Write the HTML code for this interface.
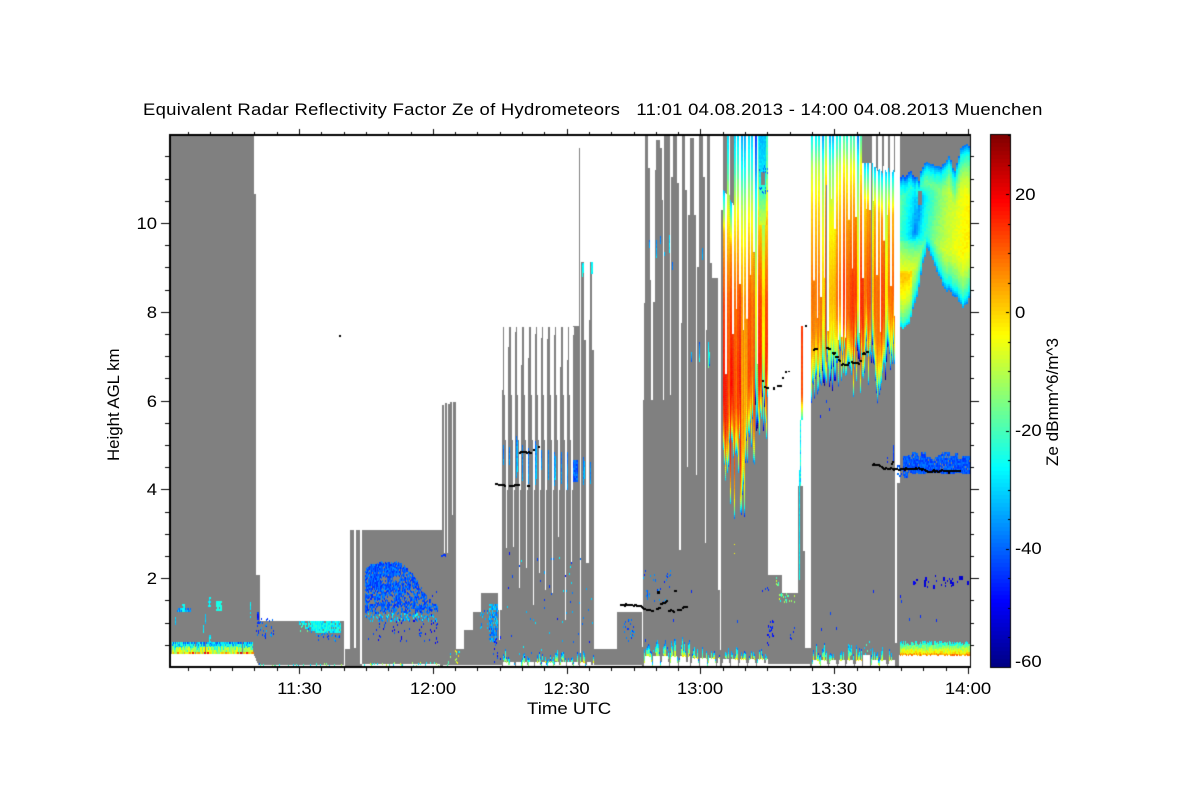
<!DOCTYPE html>
<html lang="en">
<head>
<meta charset="utf-8">
<title>Equivalent Radar Reflectivity Factor</title>
<style>
html,body{margin:0;padding:0;background:#fff;width:1200px;height:800px;overflow:hidden}
#wrap{position:relative;width:1200px;height:800px;background:#fff}
canvas,svg{position:absolute;left:0;top:0}
text{font-family:"Liberation Sans",Arial,sans-serif;fill:#000;font-size:16.5px}
</style>
</head>
<body>
<div id="wrap">
<canvas id="c" width="1200" height="800"></canvas>
<svg width="1200" height="800" viewBox="0 0 1200 800" xmlns="http://www.w3.org/2000/svg">
<text transform="translate(143,115) scale(1.12,1)" textLength="803" lengthAdjust="spacing" xml:space="preserve">Equivalent Radar Reflectivity Factor Ze of Hydrometeors   11:01 04.08.2013 - 14:00 04.08.2013 Muenchen</text>
<g text-anchor="end">
<text transform="translate(157,229) scale(1.12,1)">10</text>
<text transform="translate(157,318) scale(1.12,1)">8</text>
<text transform="translate(157,407) scale(1.12,1)">6</text>
<text transform="translate(157,495) scale(1.12,1)">4</text>
<text transform="translate(157,584) scale(1.12,1)">2</text>
</g>
<g text-anchor="middle">
<text transform="translate(299.5,694) scale(1.12,1)">11:30</text>
<text transform="translate(433,694) scale(1.12,1)">12:00</text>
<text transform="translate(566.5,694) scale(1.12,1)">12:30</text>
<text transform="translate(700,694) scale(1.12,1)">13:00</text>
<text transform="translate(834,694) scale(1.12,1)">13:30</text>
<text transform="translate(968,694) scale(1.12,1)">14:00</text>
</g>
<text transform="translate(527,714) scale(1.13,1)">Time UTC</text>
<text transform="translate(119,461) rotate(-90) scale(1.02,1)">Height AGL km</text>
<text transform="translate(1058,466) rotate(-90) scale(1.035,1)">Ze dBmm^6/m^3</text>
<g>
<text transform="translate(1015,200) scale(1.12,1)">20</text>
<text transform="translate(1015,318) scale(1.12,1)">0</text>
<text transform="translate(1015,436) scale(1.12,1)">-20</text>
<text transform="translate(1015,554) scale(1.12,1)">-40</text>
<text transform="translate(1015,667) scale(1.12,1)">-60</text>
</g>
</svg>
</div>
<script>
(function(){
var cv=document.getElementById('c'),c=cv.getContext('2d');
var s=20130804;
function R(){s|=0;s=s+0x6D2B79F5|0;var t=Math.imul(s^s>>>15,1|s);t=t+Math.imul(t^t>>>7,61|t)^t;return((t^t>>>14)>>>0)/4294967296;}
function cl(v){return v<0?0:v>1?1:v}
function jet(t){t=cl(t);var r=cl(1.5-Math.abs(4*t-3)),g=cl(1.5-Math.abs(4*t-2)),b=cl(1.5-Math.abs(4*t-1));
 return 'rgb('+Math.round(r*255)+','+Math.round(g*255)+','+Math.round(b*255)+')';}
function rect(col,a,b,t,bt){c.fillStyle=col;c.fillRect(Math.round(a),Math.round(t),Math.round(b)-Math.round(a),Math.round(bt)-Math.round(t));}
function G(a,b,t,bt){rect('#808080',a,b,t,bt===undefined?667:bt);}
function W(a,b,t,bt){rect('#ffffff',a,b,t,bt);}
function lerp(tb,x){if(x<=tb[0][0])return tb[0][1];for(var i=1;i<tb.length;i++){if(x<=tb[i][0]){var p=tb[i-1],q=tb[i];return p[1]+(q[1]-p[1])*(x-p[0])/(q[0]-p[0]);}}return tb[tb.length-1][1];}
function cell(x,y,w,h,t){c.fillStyle=jet(t);c.fillRect(x,y,w,h);}
function speck(a,b,t,bt,n,t0,t1,w,h){for(var i=0;i<n;i++){var x=Math.round(a+R()*(b-a)),y=Math.round(t+R()*(bt-t));cell(x,y,w||1,h||2,t0+R()*(t1-t0));}}
function vs(x,y0,y1,t0,t1,w){for(var y=y0;y<y1;y+=2){cell(x,y,w||1,2,t0+(t1-t0)*(y-y0)/Math.max(1,y1-y0)+(R()-.5)*.05);}}

/* ---- gray structure ---- */
G(170,254,135);G(170,256,194);G(256,260,575);G(260,344,621);
G(345,350,649);G(350,354,530);G(354,356,648);G(356,360,530);G(360,362,664);G(362,443,530);
[[442,444,405],[445,447,403],[448,450,404],[450,452,402],[453,456,402]].forEach(function(a){G(a[0],a[1],a[2]);});
W(444,445,403,528);W(447,448,404,500);W(452,453,402,470);
G(440,443,530);G(444,448,553);G(445,447,403);G(448,452,490);G(452,456,515);
G(456,464,649);G(464,473,630);G(473,481,612);G(481,498,593);G(498,502,640);G(498,499,610);G(500,502,610);
/* comb 1 */
G(502,574,327);G(573,580,326);G(579,580,148);G(581,584,262);G(584,586,340);G(586,589,563);G(589,590,320);G(590,592,262);G(592,594,350);
[[506,548],[512.7,547],[519,588],[526,568],[532.7,605],[539,573],[545,590],[552,593],[558,537],[565,620],[571,563]].forEach(function(g){
 var x=Math.round(g[0]),st=327+R()*40;
 W(x-2,x+2,327,395);W(x-1,x+2,395,440);W(x,x+2,440,Math.min(g[1],490));W(x,x+1,490,g[1]);
 W(x+2,x+3,327,st);
});
W(502,503,327,390);W(580,581,262,442);
G(594,617,649);G(617,642,612);G(642,643,647);
/* comb 2 */
G(643,718,400);
[[644,645,303],[645,648,135],[648,650,168],[650,651,280],[653,655,302],[655,656,170],[656,660,140],[660,662,148],[662,663,200],
 [664,670,136],[670,671,395],[671,673,177],[673,677,135],[677,679,183],[681,682,323],[682,685,136],[685,687,190],[688,690,215],[690,694,138],[694,696,215],
 [697,699,267],[699,703,136],[703,705,177],[706,707,330],[707,710,136],[710,712,263],[712,718,278]].forEach(function(a){G(a[0],a[1],a[2]);});
W(679,681,400,550);W(687,688,400,467);W(696,697,400,475);W(705,706,400,543);
G(718,722,590);W(720,721,590,650);
/* section 1 base */
G(721,768,135);W(718,723,135,210);
G(768,782,575);G(782,798,593);G(798,803,486);G(803,805,551);G(805,811,648);
G(811,895,135);G(895,900,643);G(897,900,483);G(900,970,135);

/* ---- striped colour sections ---- */
var dTb=[[0,.22],[4,.33],[9,.47],[16,.6],[28,.7],[50,.78],[200,.8]];
function sec(x0,x1,per,topTb,endf,gbf,startf,graytop,noGapFrom){
 var gb={},toff={},gw={};
 for(var x=x0;x<x1;x++){
  var i=Math.floor((x-x0)/per),ph=(x-x0)-i*per;
  if(gb[i]===undefined){gb[i]=gbf(i);toff[i]=(R()-.5)*.08-(R()<.2?.12:0);gw[i]=i%2?1.2:1.6;}
  var st=startf(x),en=endf(x),off=toff[i]+(R()-.5)*.035,st0=st;
  var isGap=ph>per-gw[i]&&(!noGapFrom||x<noGapFrom);
  if(st>135&&graytop)graytop(x,st);
  if(isGap){W(x,x+1,st,gb[i]);st=Math.max(st,gb[i]);}
  for(var y=st;y<en;y+=2){
   var t=Math.min(lerp(topTb,y),lerp(dTb,en-y))+off*(1+cl((y-300)/80)*.9)+(R()-.5)*.018;
   if(st0>135)t=Math.min(t,.32+(y-st0)*.009);
   cell(x,y,1,2,t);
  }
 }
}
var top1=[[135,.33],[150,.37],[170,.43],[190,.52],[210,.6],[235,.66],[265,.72],[300,.77],[400,.79]];
sec(723,768,3.5,top1,function(x){
 var b=x<745?480:(x<755?440:415);
 return b+(R()-.5)*(x<745?85:48);
},function(i){return 165+R()*210;},function(x){return (x<734&&Math.floor((x-723)/3.5)%2==0)?190+Math.floor((x-723)*1.5):135;},null,759);
/* right part of section 1: cool top with gray patch */
for(var x=759;x<768;x++){for(var y=135;y<225;y+=2){
 var t=lerp([[135,.31],[175,.36],[195,.46],[225,.58]],y)+(x>765?.12:0)+(R()-.5)*.04;
 cell(x,y,1,2,t);
}}
G(761,765,172,185);
speck(759,767,165,172,10,.2,.28);speck(759,767,185,192,12,.18,.28);
/* section 2 */
var top2=[[135,.4],[150,.48],[165,.58],[185,.64],[210,.7],[240,.74],[280,.78],[340,.8]];
var endT=[[811,395],[820,380],[840,365],[860,360],[866,353],[872,350],[874,380],[885,380],[887,360],[895,354]];
sec(811,895,3.5,top2,function(x){
 var b=lerp(endT,x),sp=x>872&&x<886?52:42;
 return b+(R()-.5)*sp+(R()<.08?18:0);
},function(i){return 190+R()*160;},function(x){return x>=862?(x>872?165+Math.round(R()*8):163):135;},function(x,st){
 if(x>=872){if(x%6>=2)W(x,x+1,135,st);}
});
G(826,827,185,362);G(871,872,135,352);
W(895,900,135,390);W(895,899,390,483);W(895,897,483,643);
/* orange stripe */
for(var y=326;y<420;y+=2){var t=lerp([[326,.82],[395,.8],[405,.65],[413,.5],[420,.38]],y);cell(801,y,2,2,t+(R()-.5)*.02);}
for(var y=420;y<486;y+=2){cell(800,y,1,2,.3+R()*.15);}

/* ---- big blob ---- */
var tB=[[900,177],[910,172],[918,180],[920,172],[925,160],[933,165],[940,167],[948,156],[953,172],[960,148],[963,144],[968,147],[970,150]];
var bB=[[900,325],[901,330],[908,323],[917,293],[922,263],[925,250],[927,248],[930,255],[935,267],[943,287],[947,290],[953,293],[962,307],[967,303],[970,290]];
var dB=[[0,.25],[3,.31],[7,.375],[13,.43],[22,.5],[33,.56],[48,.61],[62,.65]];
function seg(px,py,ax,ay,bx,by){var dx=bx-ax,dy=by-ay,u=cl(((px-ax)*dx+(py-ay)*dy)/(dx*dx+dy*dy));var qx=ax+u*dx-px,qy=ay+u*dy-py;return Math.sqrt(qx*qx+qy*qy);}
for(var x=900;x<970;x+=2){
 var tp=lerp(tB,x)+Math.round(R()*4-2),bt=lerp(bB,x)+Math.round(R()*4-2);
 for(var y=Math.round(tp);y<bt;y+=2){
  if(x>=917&&x<922&&y>=190&&y<205)continue;
  var d=Math.min(y-tp,bt-y);
  var ds=seg(x,y,919.5,197,915,232);
  d=Math.min(d,ds*1.1+1);
  var t=lerp(dB,d);
  if(x<915&&y<240)t-=.04;
  if(x<912&&y>270)t+=.06;
  cell(x,y,2,2,t+(R()-.5)*.03);
 }
}

/* ---- low-level speckle ---- */
function bands(x0,x1,y0,y1,dens){
 for(var x=x0;x<x1;x+=1){
  if(R()>dens)continue;
  for(var y=y0;y<y1;y+=2){
   var f=(y-y0)/(y1-y0);
   var t=.3+f*.35+(R()-.5)*.24;
   cell(x,y,1,2,t);
  }
 }
}
/* left band */
W(170,253,654,667);
for(var x=253;x<259;x++){W(x,x+1,654+(x-253)*2.2,667);}
bands(171,253,642,654,.92);
for(var x=171;x<253;x+=3){if(R()<.4)cell(x,652,2,2,.72+R()*.2);}
for(var x=176;x<250;x+=3){if(R()<.8)cell(x,647,2,5,.52+R()*.12);}
/* right band */
W(899,970,655,667);
for(var x=900;x<970;x++){
 var tp=641+(R()*5|0);
 for(var y=tp;y<655;y+=2){
  var t=lerp([[641,.38],[645,.47],[649,.58],[652,.64],[655,.78]],y)+(R()-.5)*.12;
  cell(x,y,1,2,t);
 }
}
/* humps */
function humps(x0,x1,per,h,ch,dens){
 for(var x=x0;x<x1;x++){
  var ph=(x-x0)%per,u=Math.abs(ph-per/2)/(per/2);
  var hh=u<.72?h:(u<.9?Math.round(h*.45):0);
  if(hh>0)W(x,x+1,667-hh,667);
  if(R()<dens&&u<.95){
   var base=667-hh;
   var top=base-Math.round((.25+R()*.75)*ch*(1-u*.35));
   var gapTop=R()<.35?base-Math.round(R()*5):base;
   for(var y=top;y<gapTop;y+=2){
    var f=(y-top)/Math.max(1,base-top);
    cell(x,y,1,2,.27+f*.36+(R()-.5)*.15);
   }
  }
 }
}
humps(502,594,6.4,5,13,.5);
humps(643,690,8.7,11,19,.75);
humps(690,720,8.7,9,14,.5);
humps(721,768,8.7,8,15,.45);
humps(811,862,8.6,7,19,.62);
W(863,870,655,667);
humps(870,895,8.6,7,17,.55);
speck(864,870,640,654,6,.25,.55);
W(256,344,665,667);W(362,440,664,667);W(768,810,664,667);W(443,502,665,667);W(594,642,665,667);
speck(258,344,663,665,24,.2,.55);speck(362,440,662,665,32,.3,.65);
speck(445,460,650,664,16,.3,.7);

/* isolated spots */
[[177,608,14,4,.2,.35],[182,604,3,8,.35,.4],[208,597,3,10,.33,.4],[216,601,6,9,.38,.42],[175,617,1,8,.3,.35],[205,614,1,10,.3,.35],[203,625,1,8,.33,.38],[209,635,2,8,.33,.38],[250,602,1,8,.35,.4],[250,612,1,6,.35,.4],[257,612,2,12,.12,.2]].forEach(function(a){
 for(var x=a[0];x<a[0]+a[2];x++)for(var y=a[1];y<a[1]+a[3];y+=2){if(R()<.85)cell(x,y,1,2,a[4]+R()*(a[5]-a[4]));}
});
speck(256,275,618,637,36,.15,.3);
/* cyan patch */
for(var x=297;x<341;x++){
 var b=621+Math.min(11,(x-297)/2.2+2),tp=621;
 for(var y=tp;y<b;y+=2){if(R()<(x<312?.6:.92))cell(x,y,1,2,.32+R()*.12);}
 if(R()<.35)cell(x,Math.round(b)+Math.round(R()*4),1,2,.2+R()*.1);
}
speck(315,341,630,640,16,.15,.3);speck(300,320,624,630,8,.4,.5);
/* blue blob */
var upper=[[365,568],[372,562],[380,561],[390,562],[397,560],[405,565],[412,572],[420,585],[428,597],[437,605],[438,612]];
var holes=[[383,579,4],[396,578,4],[404,574,3],[371,600,3],[390,598,3],[407,597,3],[420,601,3],[378,608,3],[398,609,3],[412,610,3],[427,610,2],[385,590,2]];
for(var x=365;x<438;x+=1){
 var tp=lerp(upper,x)+R()*3;
 for(var y=Math.round(tp);y<621;y+=2){
  var p=y<590?.94:(y<612?.72:.42);
  if(x>400)p=Math.min(p,y<tp+14?.8:.68);
  for(var k=0;k<holes.length;k++){var hx=x-holes[k][0],hy=y-holes[k][1];if(hx*hx+hy*hy<holes[k][2]*holes[k][2]){p*=.3;break;}}
  if(R()<p)cell(x,y,1,2,.16+R()*.11+(y>612?R()*.14:0));
 }
}
speck(365,437,618,640,45,.1,.22);speck(370,437,613,619,12,.33,.44);
speck(430,437,590,650,14,.1,.18);
speck(440,447,553,555,2,.15,.2,2,2);
/* x 480-500 patch */
for(var x=489;x<498;x++)for(var y=604;y<642;y+=2){if(R()<.72)cell(x,y,1,2,.22+R()*.14+(y>625?-.04:0));}
speck(479,490,607,628,18,.2,.33);speck(493,500,635,662,16,.12,.25);
/* comb 1 stripes */
[[503,445,465],[509,447,465],[516,436,478],[522,445,480],[528,448,484],[535,441,484],[541,450,470],[548,450,480],[554,452,485],[561,452,483],[567,452,490],[583,457,485],[590,462,484]].forEach(function(a,i){
 vs(a[0],a[1],a[2],.24,.29);if(i%3==2)vs(a[0]+1,a[1]+4,a[2]-6,.3,.35);
});
for(var x=573;x<578;x++)for(var y=460;y<481;y+=2)cell(x,y,1,2,.17+R()*.1);
speck(502,594,555,660,55,.13,.38);
speck(623,634,618,640,26,.18,.3);
speck(643,672,570,603,28,.15,.3);
vs(647,590,600,.2,.25,1);
/* sparse specks */
[[445,554],[509,552],[512,575],[537,558],[549,585],[645,639],[673,619],[691,590],[737,620],[830,612],[836,627],[821,628],[873,590],[900,595],[901,600],[909,618],[920,615],[936,619],[829,408],[826,400],[820,415]].forEach(function(p){cell(p[0],p[1],1,3,.13+R()*.08);});
[[734,544],[734,553]].forEach(function(p){cell(p[0],p[1],1,1,.62);});
/* small stripes at altitude */
[[582,263,277,.35,.42],[583,263,272,.38,.35],[591,262,273,.37,.4],[592,262,273,.38,.36],[649,240,247,.25,.28],[656,240,258,.25,.34],[660,236,244,.25,.3],[664,252,256,.3,.3],[669,235,253,.33,.36],[672,262,270,.22,.25],[702,248,259,.28,.3],[691,352,362,.3,.2],[699,342,362,.2,.42],[708,342,368,.33,.5],[709,352,365,.42,.2]].forEach(function(a){vs(a[0],a[1],a[2],a[3],a[4]);});
/* misc lower */
speck(767,773,620,645,24,.12,.2);speck(775,778,575,585,6,.4,.6);speck(778,796,593,601,22,.36,.6);
speck(762,770,585,590,4,.15,.2);speck(788,795,622,640,5,.13,.2);
vs(799,470,580,.34,.38);
/* upper blue band right */
var bx=897;
while(bx<970){
 var bw=2+Math.floor(R()*4),tp0=bx<902?445+R()*25:(bx>955?456+R()*3:451+R()*8);
 var b=bx<905?477:473;
 for(var x=bx;x<bx+bw&&x<970;x++){
  for(var y=Math.round(tp0);y<b;y+=2){if(R()<(bx<902?.5:.93))cell(x,y,1,2,.17+R()*.08);}
 }
 bx+=bw;
}
vs(893,445,462,.18,.2);speck(884,896,455,472,3,.15,.2);
[[913,581],[924,580],[925,577],[933,585],[943,577],[950,580],[952,582],[959,576],[961,576],[924,583],[967,581]].forEach(function(p){cell(p[0],p[1],2,4,.07+R()*.05);});
speck(912,965,574,588,18,.06,.14);

/* ---- black cloud-base dots ---- */
c.fillStyle='#000';
function dots(pts,w,h){
 for(var i=1;i<pts.length;i++){
  var a=pts[i-1],b=pts[i],dx=b[0]-a[0],dy=b[1]-a[1],n=Math.max(1,Math.ceil(Math.abs(dx)/1.3));
  for(var k=0;k<n;k++){var u=k/n;c.fillRect(Math.round(a[0]+dx*u),Math.round(a[1]+dy*u+(R()-.5)*1.2),w||2,h||2);}
 }
}
c.fillRect(339,335,2,2);
dots([[519,452],[524,451],[531,452]]);c.fillRect(533,449,2,2);c.fillRect(538,446,2,2);
dots([[495,483],[500,484],[505,485]]);dots([[509,485],[519,484]]);c.fillRect(527,485,3,2);
dots([[620,604],[630,604],[640,605],[643,608],[653,610]]);
dots([[656,608],[660,607]]);dots([[660,603],[664,602],[667,600]]);dots([[668,610],[674,610]]);dots([[677,609],[681,609]]);dots([[682,607],[687,605]]);
c.fillRect(657,591,3,3);c.fillRect(674,590,3,2);
c.fillRect(762,380,2,2);c.fillRect(764,386,2,2);c.fillRect(766,387,3,2);c.fillRect(773,387,2,3);c.fillRect(777,385,5,2);c.fillRect(782,377,2,2);c.fillRect(785,371,2,2);c.fillRect(788,371,2,1);c.fillRect(805,325,2,2);
dots([[813,349],[817,347]]);dots([[826,347],[830,348]]);dots([[832,353],[835,352]]);dots([[835,356],[838,355]]);dots([[838,360],[840,359]]);dots([[841,364],[846,364],[849,362]]);dots([[851,362],[859,362]]);dots([[860,360],[861,358]]);dots([[862,353],[868,351]]);
dots([[872,464],[878,464],[883,468],[900,468],[920,468],[927,471],[940,470],[960,470]]);
[[891,463],[892,461],[933,469],[938,471],[948,472]].forEach(function(p){c.fillStyle='#000';c.fillRect(p[0],p[1],2,2);});

/* ---- colourbar ---- */
for(var y=135;y<668;y++){var t=1-(Math.floor((y-135)/4)*4+2)/533;c.fillStyle=jet(t);c.fillRect(990,y,21,1);}
c.fillStyle='#000';
c.fillRect(990,134,21,1);c.fillRect(990,667,21,1);c.fillRect(990,134,1,534);c.fillRect(1010,134,1,534);
for(var k=0;k<=18;k++){var yy=Math.round(135+k*29.55);c.fillRect(k%4==2?1006:1008,yy,3,1);}

/* ---- axes ---- */
c.fillStyle='#000';
c.fillRect(169,134,802,2);c.fillRect(169,666,802,2);c.fillRect(169,134,2,534);c.fillRect(970,134,1,534);
for(var k=-6;k<=30;k++){
 var x=Math.round(299+k*22.3);
 if(x<170||x>970)continue;
 var m=(k%6==0);
 c.fillRect(x,m?129:132,1,m?6:3);
 c.fillRect(x,667,1,m?7:4);
}
for(var k=1;k<=23;k++){
 var y=Math.round(667-k*22.2);
 var m=(k%4==0);
 c.fillRect(m?161:165,y,m?9:5,1);
 c.fillRect(970,y,m?9:4,1);
}
})();
</script>
</body>
</html>
